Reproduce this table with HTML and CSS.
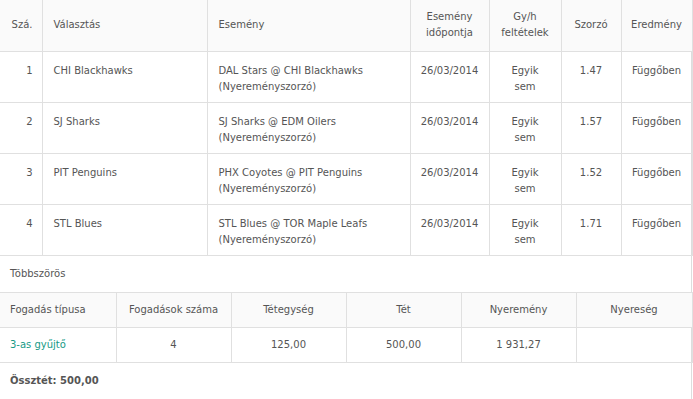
FILE: index.html
```html
<!DOCTYPE html>
<html>
<head>
<meta charset="utf-8">
<link rel="stylesheet" href="styles.css">
</head>
<body>
<div class="panel">
  <table class="sel">
    <colgroup>
      <col class="c1"><col class="c2"><col class="c3"><col class="c4"><col class="c5"><col class="c6"><col class="c7">
    </colgroup>
    <thead>
      <tr>
        <th class="r">Szá.</th>
        <th class="l">Választás</th>
        <th class="l">Esemény</th>
        <th>Esemény<br>időpontja</th>
        <th>Gy/h<br>feltételek</th>
        <th>Szorzó</th>
        <th>Eredmény</th>
      </tr>
    </thead>
    <tbody>
      <tr>
        <td class="r">1</td>
        <td class="l">CHI Blackhawks</td>
        <td class="l">DAL Stars @ CHI Blackhawks<br>(Nyereményszorzó)</td>
        <td>26/03/2014</td>
        <td>Egyik<br>sem</td>
        <td>1.47</td>
        <td>Függőben</td>
      </tr>
      <tr>
        <td class="r">2</td>
        <td class="l">SJ Sharks</td>
        <td class="l">SJ Sharks @ EDM Oilers<br>(Nyereményszorzó)</td>
        <td>26/03/2014</td>
        <td>Egyik<br>sem</td>
        <td>1.57</td>
        <td>Függőben</td>
      </tr>
      <tr>
        <td class="r">3</td>
        <td class="l">PIT Penguins</td>
        <td class="l">PHX Coyotes @ PIT Penguins<br>(Nyereményszorzó)</td>
        <td>26/03/2014</td>
        <td>Egyik<br>sem</td>
        <td>1.52</td>
        <td>Függőben</td>
      </tr>
      <tr>
        <td class="r">4</td>
        <td class="l">STL Blues</td>
        <td class="l">STL Blues @ TOR Maple Leafs<br>(Nyereményszorzó)</td>
        <td>26/03/2014</td>
        <td>Egyik<br>sem</td>
        <td>1.71</td>
        <td>Függőben</td>
      </tr>
    </tbody>
  </table>
  <div class="multi">Többszörös</div>
  <table class="bets">
    <colgroup>
      <col class="d1"><col class="d2"><col class="d3"><col class="d4"><col class="d5"><col class="d6">
    </colgroup>
    <thead>
      <tr>
        <th class="l">Fogadás típusa</th>
        <th>Fogadások száma</th>
        <th>Tétegység</th>
        <th>Tét</th>
        <th>Nyeremény</th>
        <th>Nyereség</th>
      </tr>
    </thead>
    <tbody>
      <tr>
        <td class="l link">3-as gyűjtő</td>
        <td>4</td>
        <td>125,00</td>
        <td>500,00</td>
        <td>1 931,27</td>
        <td></td>
      </tr>
    </tbody>
  </table>
  <div class="total">Össztét: 500,00</div>
</div>
</body>
</html>
```
FILE: styles.css
```css
html, body {
  margin: 0;
  padding: 0;
  background: #fff;
}
body {
  font-family: "DejaVu Sans", Verdana, sans-serif;
  font-size: 10px;
  color: #555;
}
.panel {
  width: 691px;
  height: 399px;
  border-right: 1px solid #ddd;
}
table {
  border-collapse: collapse;
  table-layout: fixed;
  width: 692px;
}
th, td {
  border: 1px solid #e0e0e0;
  text-align: center;
  font-weight: normal;
  line-height: 16px;
}
th:first-child, td:first-child { border-left: none; }
.sel { border-top: none; }
.sel th { border-top: none; }
th {
  background: #fafafa;
  vertical-align: middle;
  padding: 0 8px;
}
.sel th { height: 51px; box-sizing: border-box; }
.sel td {
  height: 51px;
  vertical-align: top;
  padding: 11px 8px 0;
  box-sizing: border-box;
}
.sel th.r, .sel td.r { padding-right: 9px; text-align: right; }
.sel th.l, .sel td.l { padding-left: 11px; text-align: left; }
.bets th.l, .bets td.l { padding-left: 10px; text-align: left; }
.c1 { width: 42px; }
.c2 { width: 165px; }
.c3 { width: 203px; }
.c4 { width: 79px; }
.c5 { width: 72px; }
.c6 { width: 60px; }
.c7 { width: 71px; }
.multi {
  height: 36px;
  line-height: 36px;
  padding-left: 10px;
}
.bets th { height: 35px; box-sizing: border-box; }
.bets td { height: 35px; box-sizing: border-box; vertical-align: middle; padding: 0 8px; }
.d1 { width: 116px; }
.d2 { width: 115px; }
.d3 { width: 115px; }
.d4 { width: 115px; }
.d5 { width: 115px; }
.d6 { width: 116px; }
.link { color: #179a86; }
.total {
  padding-left: 10px;
  height: 36px;
  line-height: 36px;
  font-weight: bold;
}
```
